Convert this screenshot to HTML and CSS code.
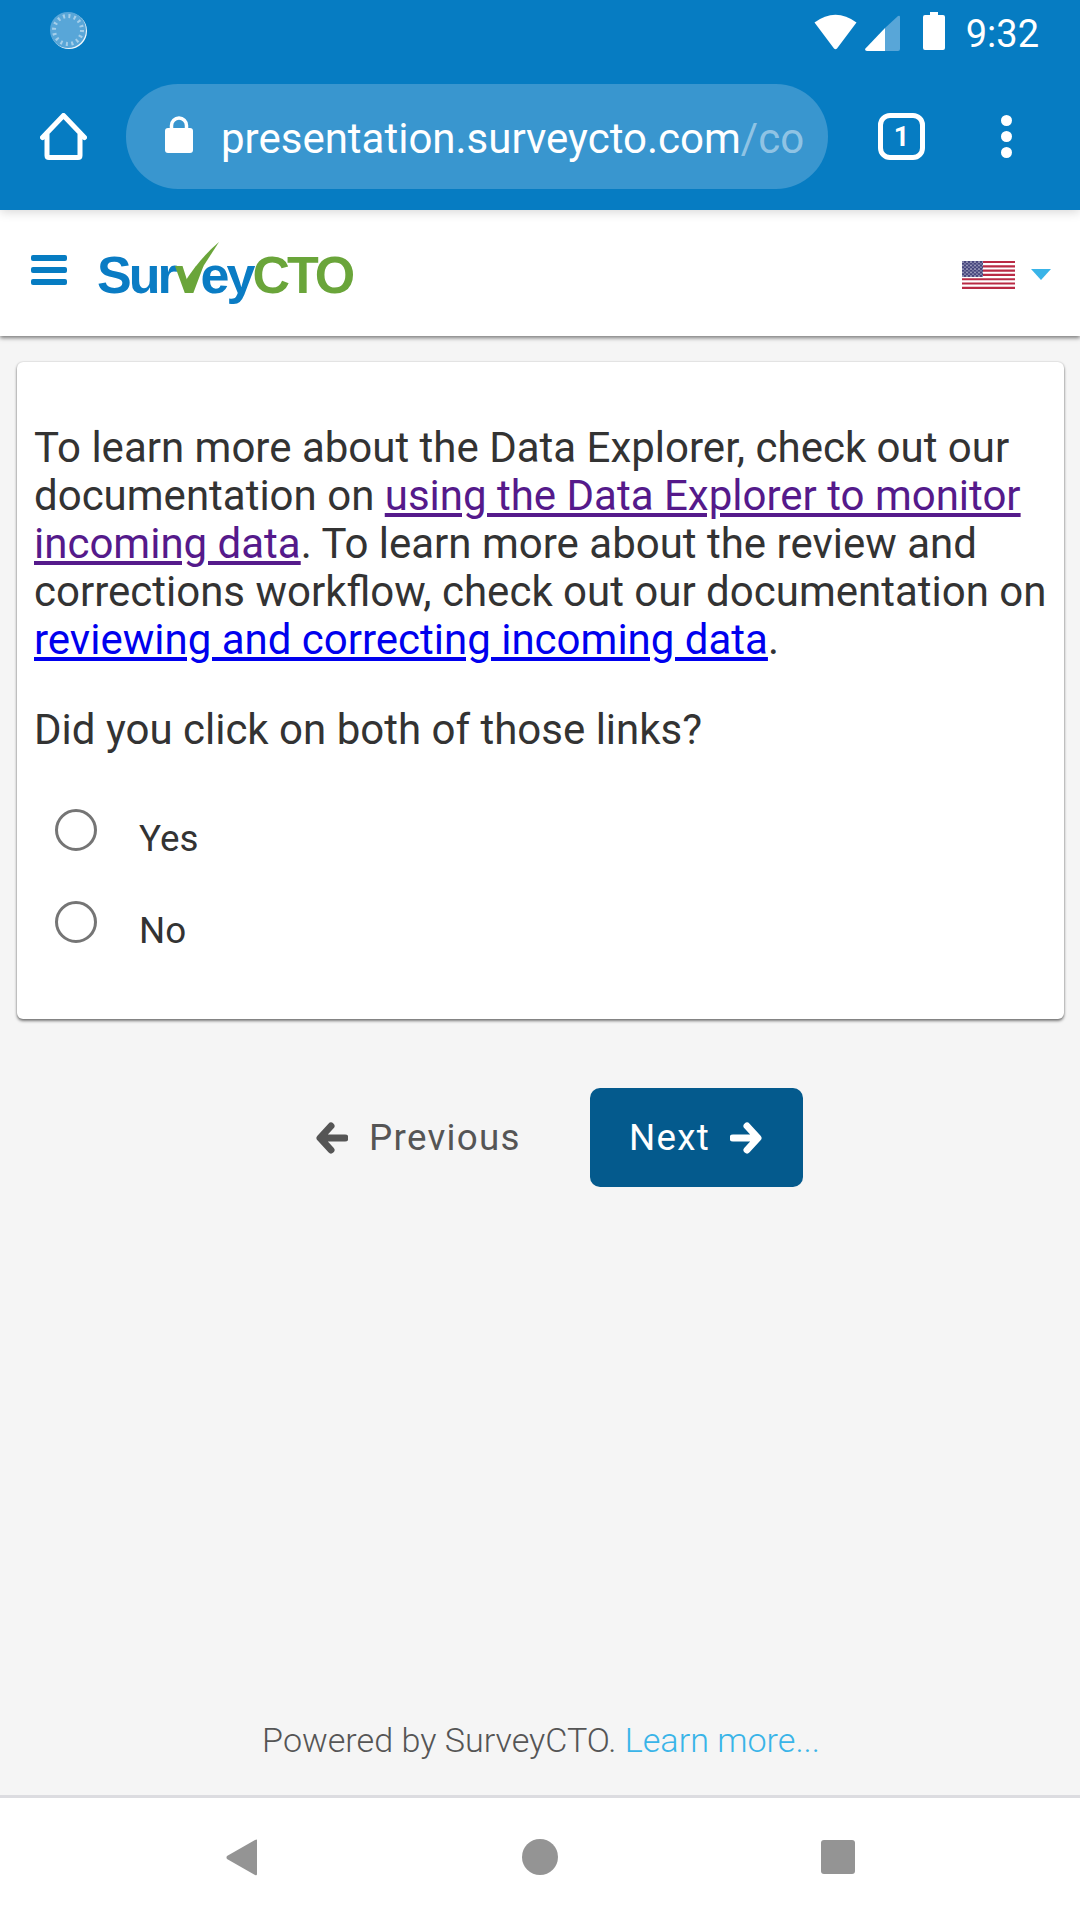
FILE: index.html
```html
<!DOCTYPE html>
<html lang="en">
<head>
<meta charset="utf-8">
<title>SurveyCTO</title>
<link rel="stylesheet" href="styles.css">
</head>
<body>
<div class="screen">
  <header class="chrome">
    <div class="status">
      <svg class="spinner" viewBox="0 0 38 38"><circle cx="19" cy="19" r="18" fill="#fff" opacity=".95"/><circle cx="18" cy="18" r="18" fill="#58a6d8"/><circle cx="18" cy="18" r="14" fill="none" stroke="#a5cfea" stroke-width="4" stroke-dasharray="2 3.5"/></svg>
      <div class="status-right">
        <svg class="wifi" viewBox="0 0 44 37"><path d="M1 9.500Q22-6 43 9.500L23.500 35.500Q22 37 20.500 35.500Z" fill="#fff"/></svg>
        <svg class="signal" viewBox="0 0 35 36"><path d="M20 13 0 34Q0 36 2 36H20Z" fill="#fff"/><path d="M20 13 33 1Q35 0 35 2V34Q35 36 33 36H20Z" fill="#58a6d8"/></svg>
        <svg class="battery" viewBox="0 0 22 38"><path d="M7 0H15V3H20Q22 3 22 5V36Q22 38 20 38H2Q0 38 0 36V5Q0 3 2 3H7Z" fill="#fff"/></svg>
        <span class="time">9:32</span>
      </div>
    </div>
    <div class="toolbar">
      <svg class="home" viewBox="0 0 47 47"><path d="M2.500 24.500 23.500 2.500 44.500 24.500M7 20V42.500Q7 44.500 9 44.500H38Q40 44.500 40 42.500V20" fill="none" stroke="#fff" stroke-width="5" stroke-linecap="round" stroke-linejoin="round"/></svg>
      <div class="url">
        <svg class="lock" viewBox="0 0 28 37"><path d="M6.500 13V9.500a7.500 7.500 0 0 1 15 0V13" fill="none" stroke="#fff" stroke-width="3.500"/><rect y="12" width="28" height="25" rx="3" fill="#fff"/></svg>
        <span class="url-text">presentation.surveycto.com<span class="url-path">/co</span></span>
      </div>
      <div class="tabs">1</div>
      <div class="menu-dots"><i></i><i></i><i></i></div>
    </div>
  </header>
  <nav class="navbar">
    <div class="burger"><i></i><i></i><i></i></div>
    <div class="logo">
      <span class="blue">Sur</span><span class="green">v</span><span class="blue">ey</span><span class="green">CTO</span>
      <svg class="tick" viewBox="0 0 44 52"><path d="M10 51 43 0Q24 16 8 41Z" fill="#6aa53a"/></svg>
    </div>
    <div class="lang">
      <svg class="flag" viewBox="0 0 53 28" preserveAspectRatio="none">
        <defs><pattern id="stars" width="4" height="3.500" patternUnits="userSpaceOnUse"><rect width="4" height="3.500" fill="#46467c"/><circle cx="1" cy="1" r=".8" fill="#c8c8dc"/><circle cx="3" cy="2.700" r=".8" fill="#a8a8c8"/></pattern></defs>
        <rect width="53" height="28" fill="#fff"/>
        <path d="M0 1H53M0 5.300H53M0 9.600H53M0 13.900H53M0 18.200H53M0 22.500H53M0 26.800H53" stroke="#b92a44" stroke-width="2.150"/>
        <rect width="21" height="16" fill="url(#stars)"/>
      </svg>
      <span class="caret"></span>
    </div>
  </nav>
  <main class="content">
    <section class="card">
      <p class="para">To learn more about the Data Explorer, check out our documentation on <a class="visited" href="#a">using the Data Explorer to monitor incoming data</a>. To learn more about the review and corrections workflow, check out our documentation on <a class="link" href="#b">reviewing and correcting incoming data</a>.</p>
      <p class="para question">Did you click on both of those links?</p>
      <div class="choice"><span class="radio"></span><span class="label">Yes</span></div>
      <div class="choice"><span class="radio"></span><span class="label">No</span></div>
    </section>
    <div class="actions">
      <div class="prev">
        <svg class="arrow" viewBox="0 0 32 32"><path d="M15 4 4 16 15 28M5 16H29" fill="none" stroke="#555" stroke-width="7" stroke-linecap="round" stroke-linejoin="round"/></svg>
        <span>Previous</span>
      </div>
      <div class="next">
        <span>Next</span>
        <svg class="arrow" viewBox="0 0 32 32"><path d="M17 4 28 16 17 28M3 16H27" fill="none" stroke="#fff" stroke-width="7" stroke-linecap="round" stroke-linejoin="round"/></svg>
      </div>
    </div>
    <footer class="powered">Powered by SurveyCTO. <a href="#c">Learn more...</a></footer>
  </main>
  <div class="sysnav">
    <svg class="back" viewBox="0 0 32 37"><path d="M31 1V35Q31 37 29 36L1 20Q0 18.500 1 17L29 1Q31 0 31 1Z" fill="#949494"/></svg>
    <span class="dot"></span>
    <span class="square"></span>
  </div>
</div>
</body>
</html>
```
FILE: styles.css
```css
* { box-sizing: border-box; }
html, body { margin: 0; padding: 0; }
body { font-family: Roboto, "Liberation Sans", sans-serif; background: #f5f5f5; }
.screen { width: 1080px; height: 1920px; display: flex; flex-direction: column; overflow: hidden; }

.chrome { height: 210px; background: #067cc2; color: #fff; flex: none; position: relative; z-index: 2; box-shadow: 0 2px 10px rgba(0,0,0,.16); }
.status { height: 84px; display: flex; justify-content: space-between; align-items: flex-start; padding: 12px 41px 0 50px; }
.spinner { width: 38px; height: 38px; }
.status-right { display: flex; align-items: flex-start; }
.wifi { width: 45px; height: 37px; margin-top: 1px; margin-right: 7px; }
.signal { width: 35px; height: 36px; margin-top: 3px; margin-right: 23px; }
.battery { width: 22px; height: 38px; }
.time { font-size: 38px; font-weight: 400; line-height: 44px; margin-left: 21px; }

.toolbar { display: flex; align-items: center; height: 105px; padding-left: 40px; }
.home { width: 47px; height: 47px; flex: none; margin-right: 39px; }
.url { width: 702px; height: 105px; border-radius: 52px; background: #3996cf; display: flex; align-items: center; padding-left: 39px; flex: none; overflow: hidden; }
.lock { width: 28px; height: 37px; flex: none; margin-right: 28px; margin-top: -4px; }
.url-text { font-size: 42px; line-height: 48px; white-space: nowrap; margin-top: 4px; }
.url-path { color: rgba(255,255,255,.45); }
.tabs { width: 47px; height: 47px; border: 5px solid #fff; border-radius: 12px; margin-left: 50px; flex: none; display: flex; align-items: center; justify-content: center; font-size: 27px; font-weight: 700; }
.menu-dots { display: flex; flex-direction: column; gap: 5px; margin-left: 76px; }
.menu-dots i { display: block; width: 11px; height: 11px; border-radius: 50%; background: #fff; }

.navbar { height: 126px; background: #fff; flex: none; display: flex; align-items: center; padding-left: 31px; box-shadow: 0 2px 4px rgba(0,0,0,.5); position: relative; z-index: 1; }
.burger { display: flex; flex-direction: column; gap: 6px; width: 36px; margin-top: -6px; }
.burger i { display: block; height: 6px; border-radius: 2px; background: #067cc2; }
.logo { position: relative; margin-left: 30px; margin-top: 3px; font-family: "Liberation Sans", sans-serif; font-size: 52px; font-weight: 700; letter-spacing: -3px; line-height: 62px; white-space: nowrap; }
.blue { color: #0a7cc4; }
.green { color: #6aa53a; }
.tick { position: absolute; left: 79px; top: -2px; width: 44px; height: 52px; }
.lang { margin-left: auto; display: flex; align-items: center; padding-right: 29px; margin-top: 3px; }
.flag { width: 53px; height: 28px; }
.caret { width: 0; height: 0; border-left: 10px solid transparent; border-right: 10px solid transparent; border-top: 11px solid #39b4e8; margin-left: 16px; }

.content { flex: 1; display: flex; flex-direction: column; }
.card { margin: 26px 16px 0 17px; height: 657px; background: #fff; border-radius: 6px; box-shadow: 0 2px 3px rgba(0,0,0,.5), 0 0 2px rgba(0,0,0,.2); padding: 62px 17px 0; color: #333; }
.para { margin: 0; font-size: 42px; line-height: 48px; }
.question { margin-top: 42px; margin-bottom: 55px; }
.visited { color: #551a8b; text-decoration: underline; }
.link { color: #00e; text-decoration: underline; }
.choice { display: flex; height: 92px; padding-left: 21px; }
.radio { width: 42px; height: 42px; border: 3px solid #757575; border-radius: 50%; flex: none; }
.label { margin-left: 42px; font-size: 36.750px; line-height: 42px; margin-top: 9px; }

.actions { display: flex; margin-top: 69px; height: 99px; align-items: center; padding-left: 316px; font-size: 36.750px; letter-spacing: 1.300px; }
.arrow { width: 32px; height: 32px; flex: none; }
.prev { display: flex; align-items: center; gap: 21px; color: #555; width: 274px; }
.next { width: 213px; height: 99px; background: #045a8d; border-radius: 10px; color: #fff; display: flex; align-items: center; padding-left: 39px; gap: 20px; }

.powered { margin-top: auto; height: 77px; line-height: 44px; text-align: center; padding-left: 2px; font-size: 34.125px; font-weight: 300; color: #555; }
.powered a { color: #39b4e8; text-decoration: none; }

.sysnav { height: 125px; flex: none; background: #fff; border-top: 3px solid #dcdce0; position: relative; display: flex; align-items: center; padding: 0 0 4px 226px; }
.back { width: 32px; height: 37px; flex: none; }
.dot { width: 36px; height: 36px; border-radius: 50%; background: #949494; margin-left: 264px; flex: none; }
.square { width: 34px; height: 34px; border-radius: 3px; background: #949494; margin-left: 263px; flex: none; }
```
